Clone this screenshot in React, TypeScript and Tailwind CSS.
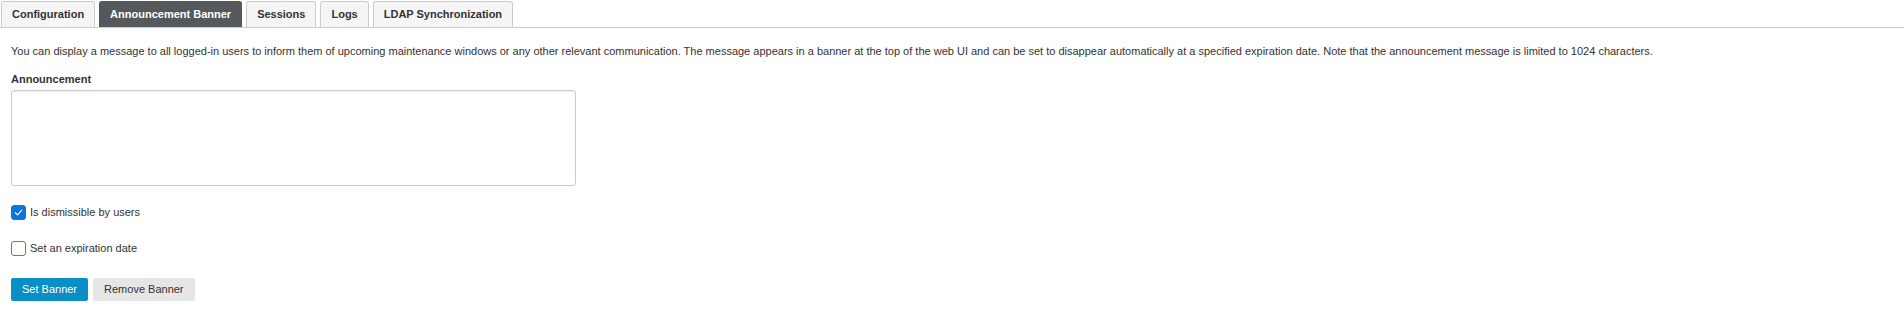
import { useState } from "react";

const tabs = ["Configuration", "Announcement Banner", "Sessions", "Logs", "LDAP Synchronization"];

const Checkbox = ({ checked, label, onToggle }: { checked: boolean; label: string; onToggle: () => void }) => (
  <label className="flex items-center gap-[4px] cursor-pointer select-none" onClick={onToggle}>
    <span
      className={
        checked
          ? "flex h-[15px] w-[15px] items-center justify-center rounded-[3px] bg-[#0b74de] border border-[#0b74de]"
          : "flex h-[15px] w-[15px] items-center justify-center rounded-[3px] bg-white border border-[#767676]"
      }
    >
      {checked && (
        <svg width="11" height="11" viewBox="0 0 12 12" fill="none">
          <path d="M2.5 6.3 L5 8.6 L9.6 3.4" stroke="white" strokeWidth="1.3" strokeLinecap="round" strokeLinejoin="round" />
        </svg>
      )}
    </span>
    <span className="text-[11px] leading-[15px] text-[#333]">{label}</span>
  </label>
);

const App = () => {
  const [active, setActive] = useState(1);
  const [dismissible, setDismissible] = useState(true);
  const [expires, setExpires] = useState(false);

  return (
    <div className="w-[1904px] h-[315px] bg-white font-['Liberation_Sans',Arial,sans-serif] text-[#333]">
      <div className="flex items-end gap-[4px] pl-px pt-px border-b border-[#cccccc]">
        {tabs.map((tab, i) => (
          <button
            key={tab}
            onClick={() => setActive(i)}
            className={
              i === active
                ? "h-[26px] px-[10px] rounded-t-[3px] border border-b-0 border-[#55595c] bg-[#55595c] text-white text-[11px] font-bold"
                : "h-[26px] px-[10px] rounded-t-[3px] border border-b-0 border-[#cccccc] bg-[#f5f5f5] text-[#333] text-[11px] font-bold"
            }
          >
            {tab}
          </button>
        ))}
      </div>

      <div className="pl-[11px]">
        <p className="mt-[15px] text-[11px] leading-[16px]">
          You can display a message to all logged-in users to inform them of upcoming maintenance windows or any other relevant communication. The message appears in a banner at the top of the web UI and can be set to disappear automatically at a specified expiration date. Note that the announcement message is limited to 1024 characters.
        </p>

        <div className="mt-[12px] text-[11px] leading-[16px] font-bold">Announcement</div>
        <textarea className="mt-[3px] block w-[565px] h-[96px] rounded-[3px] border border-[#cccccc] shadow-[inset_0_1px_1px_rgba(0,0,0,0.075)] resize-none outline-none p-[6px] text-[11px]" />

        <div className="mt-[19px]">
          <Checkbox checked={dismissible} label="Is dismissible by users" onToggle={() => setDismissible(!dismissible)} />
        </div>
        <div className="mt-[21px]">
          <Checkbox checked={expires} label="Set an expiration date" onToggle={() => setExpires(!expires)} />
        </div>

        <div className="mt-[22px] flex gap-[5px]">
          <button className="h-[23px] px-[11px] rounded-[2px] bg-[#0a8ec6] text-white text-[11px]">Set Banner</button>
          <button className="h-[23px] px-[11px] rounded-[2px] bg-[#e6e6e6] text-[#333] text-[11px]">Remove Banner</button>
        </div>
      </div>
    </div>
  );
};

export default App;
